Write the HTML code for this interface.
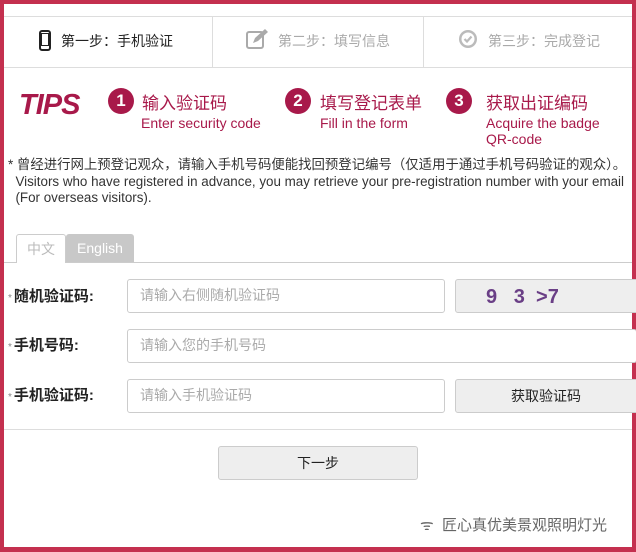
<!DOCTYPE html><html><head><meta charset="utf-8"><style>
*{margin:0;padding:0;box-sizing:border-box}
body{width:636px;height:552px;background:#c4304f;position:relative;overflow:hidden;font-family:"Liberation Sans","Noto Sans CJK SC",sans-serif}
.in{position:absolute;left:4px;top:4px;right:4px;bottom:5px;background:#fff}
.a{position:absolute}
.circ{position:absolute;width:26px;height:26px;border-radius:50%;background:#a8194a;color:#fff;font-weight:bold;font-size:17px;text-align:center;line-height:26px}
.h{position:absolute;color:#a8194a;font-size:17px;top:89px}
.e{position:absolute;color:#a8194a;font-size:14px;line-height:16px;top:115px}
.inp{position:absolute;border:1px solid #ccc;border-radius:3px;background:#fff;color:#aaa;font-size:14px;line-height:31px;padding-left:12px}
.lbl{position:absolute;left:8px;font-size:15px;font-weight:bold;color:#222}
.lbl i{font-style:normal;color:#888;font-weight:normal;font-size:10px;margin-right:2px}
.btn{position:absolute;background:#eee;border:1px solid #ccc;border-radius:3px;text-align:center;font-size:14px;color:#222}
</style></head><body>
<div class="in"></div>
<div class="a" style="left:4px;right:4px;top:16px;height:1px;background:#ddd"></div>
<div class="a" style="left:4px;right:4px;top:67px;height:1px;background:#ddd"></div>
<div class="a" style="left:212px;top:17px;width:1px;height:50px;background:#ddd"></div>
<div class="a" style="left:423px;top:17px;width:1px;height:50px;background:#ddd"></div>
<svg class="a" style="left:39px;top:30px" width="12" height="21"><rect x="1" y="1" width="10" height="19" rx="2" fill="none" stroke="#222" stroke-width="2"/><rect x="1" y="3" width="10" height="13" fill="#222"/><rect x="3" y="4" width="6" height="11" fill="#fff"/></svg>
<div class="a" style="left:61px;top:31px;font-size:14px;color:#222">第一步：手机验证</div>
<svg class="a" style="left:245px;top:28px" width="24" height="22"><rect x="2" y="4" width="16" height="16" rx="2" fill="none" stroke="#aaa" stroke-width="2"/><path d="M8 15 L10 10 L20 1 L23 4 L13 13 Z" fill="#aaa"/></svg>
<div class="a" style="left:278px;top:31px;font-size:14px;color:#aaa">第二步：填写信息</div>
<svg class="a" style="left:458px;top:29px" width="20" height="20"><circle cx="10" cy="10" r="9" fill="#bbb"/><circle cx="10" cy="10" r="6.5" fill="#fff"/><path d="M6.5 10 L9 12.5 L13.5 7.5" stroke="#bbb" stroke-width="2.2" fill="none"/></svg>
<div class="a" style="left:488px;top:31px;font-size:14px;color:#aaa">第三步：完成登记</div>
<div class="a" style="left:19px;top:89px;font-size:29px;font-weight:bold;font-style:italic;color:#a8194a;letter-spacing:-1px">TIPS</div>
<div class="circ" style="left:108px;top:88px">1</div><div class="h" style="left:142px">输入验证码</div><div class="e" style="left:141px">Enter security code</div>
<div class="circ" style="left:285px;top:88px">2</div><div class="h" style="left:320px">填写登记表单</div><div class="e" style="left:320px">Fill in the form</div>
<div class="circ" style="left:446px;top:88px">3</div><div class="h" style="left:486px">获取出证编码</div><div class="e" style="left:486px">Acquire the badge<br>QR-code</div>
<div class="a" style="left:8px;top:157px;font-size:13.4px;color:#333;line-height:16.5px;white-space:nowrap">* 曾经进行网上预登记观众，请输入手机号码便能找回预登记编号（仅适用于通过手机号码验证的观众）。<br>&nbsp;&nbsp;Visitors who have registered in advance, you may retrieve your pre-registration number with your email<br>&nbsp;&nbsp;(For overseas visitors).</div>
<div class="a" style="left:4px;right:4px;top:262px;height:1px;background:#ccc"></div>
<div class="a" style="left:16px;top:234px;width:50px;height:29px;border:1px solid #ccc;border-bottom:none;background:#fff;border-radius:3px 3px 0 0;color:#bbb;font-size:14px;text-align:center;line-height:28px">中文</div>
<div class="a" style="left:66px;top:234px;width:68px;height:28px;background:#c8c8c8;border-radius:3px 3px 0 0;color:#fff;font-size:14px;text-align:center;line-height:29px">English</div>
<div class="lbl" style="top:285px"><i>*</i>随机验证码:</div>
<div class="lbl" style="top:334px"><i>*</i>手机号码:</div>
<div class="lbl" style="top:384px"><i>*</i>手机验证码:</div>
<div class="inp" style="left:127px;top:279px;width:318px;height:34px">请输入右侧随机验证码</div>
<div class="inp" style="left:127px;top:329px;width:510px;height:34px">请输入您的手机号码</div>
<div class="inp" style="left:127px;top:379px;width:318px;height:34px">请输入手机验证码</div>
<div class="btn" style="left:455px;top:279px;width:185px;height:34px;font-size:20px;font-weight:bold;color:#6a3f86;line-height:34px;text-align:left;padding-left:30px">9&nbsp;&nbsp;&nbsp;3&nbsp;&nbsp;&gt;7</div>
<div class="btn" style="left:455px;top:379px;width:185px;height:34px;line-height:32px;text-align:left;padding-left:55px">获取验证码</div>
<div class="a" style="left:4px;right:4px;top:429px;height:1px;background:#ddd"></div>
<div class="btn" style="left:218px;top:446px;width:200px;height:34px;line-height:32px">下一步</div>
<div class="a" style="left:420px;top:514px;font-size:15px;color:#666">ᯤ&nbsp;&nbsp;匠心真优美景观照明灯光</div>
</body></html>
